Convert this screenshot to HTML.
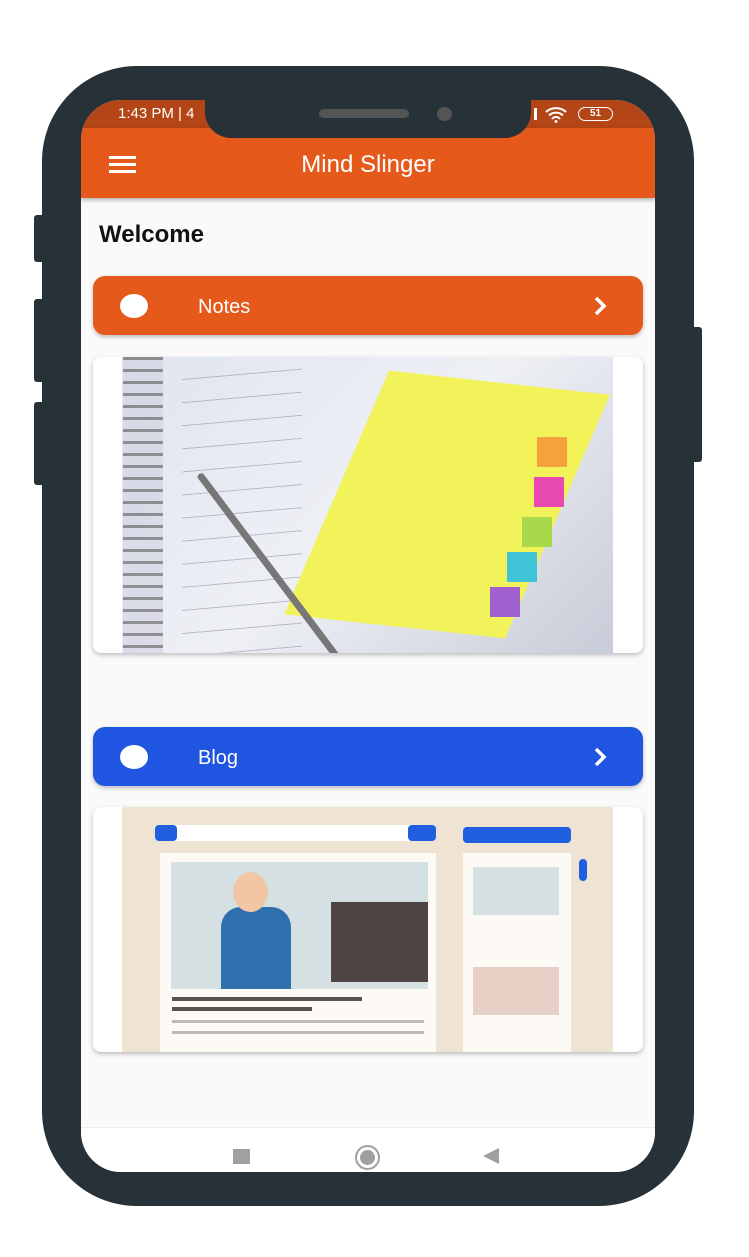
<!DOCTYPE html>
<html><head><style>
*{margin:0;padding:0;box-sizing:border-box}
body{width:749px;height:1257px;background:#fff;position:relative;overflow:hidden;font-family:"Liberation Sans",sans-serif}
.abs{position:absolute}
.btn{position:absolute;left:93px;width:550px;height:59px;border-radius:12px;box-shadow:0 2px 4px rgba(0,0,0,.25);color:#fff;font-size:20px}
.btn .dot{position:absolute;left:27px;top:18px;width:28px;height:24px;border-radius:50%;background:#fff}
.btn .t{position:absolute;left:105px;top:20px}
.btn svg{position:absolute;right:36px;top:19px}
.card{position:absolute;left:93px;width:550px;background:#fff;border-radius:8px;box-shadow:0 2px 5px rgba(0,0,0,.25);overflow:hidden}
.img{position:absolute;left:29px;top:0;width:491px;height:100%;overflow:hidden}
</style></head><body>
<div class="abs" style="left:34px;top:215px;width:12px;height:47px;background:#263238;border-radius:3px"></div>
<div class="abs" style="left:34px;top:299px;width:12px;height:83px;background:#263238;border-radius:3px"></div>
<div class="abs" style="left:34px;top:402px;width:12px;height:83px;background:#263238;border-radius:3px"></div>
<div class="abs" style="left:690px;top:327px;width:12px;height:135px;background:#263238;border-radius:3px"></div>
<div class="abs" style="left:42px;top:66px;width:652px;height:1140px;background:#263238;border-radius:95px"></div>
<div class="abs" style="left:81px;top:100px;width:574px;height:1072px;background:#fafafa;border-radius:40px;overflow:hidden">
  <div class="abs" style="left:0;top:0;width:574px;height:28px;background:#b44516"></div>
  <div class="abs" style="left:37px;top:5px;color:#fff;font-size:15px">1:43 PM | 4</div>
  <div class="abs" style="left:453px;top:8px;width:3px;height:12px;background:#fff"></div>
  <svg class="abs" style="left:464px;top:6px" width="24" height="17" viewBox="0 0 24 17"><path d="M1 6a15 15 0 0 1 20 0M4 9.5a10 10 0 0 1 14 0M7 13a5 5 0 0 1 8 0" stroke="#fff" stroke-width="2" fill="none"/><circle cx="11" cy="15.5" r="1.5" fill="#fff"/></svg>
  <div class="abs" style="left:497px;top:7px;width:35px;height:14px;border:1.5px solid #fff;border-radius:7px;color:#fff;font-size:10px;font-weight:bold;text-align:center;line-height:11px">51</div>
  <div class="abs" style="left:0;top:28px;width:574px;height:70px;background:#e55a1b;box-shadow:0 2px 4px rgba(0,0,0,.3)"></div>
  <div class="abs" style="left:28px;top:56px;width:27px;height:3px;background:#fff;box-shadow:0 7px 0 #fff,0 14px 0 #fff"></div>
  <div class="abs" style="left:0;top:51px;width:574px;text-align:center;color:#fff;font-size:24px">Mind Slinger</div>
  <div class="abs" style="left:18px;top:121px;font-size:24px;font-weight:bold;color:#111">Welcome</div>
  <div class="abs" style="left:0;top:1027px;width:574px;height:45px;background:#fff;border-top:1px solid #eee"></div>
  <div class="abs" style="left:152px;top:1049px;width:17px;height:15px;background:#a0a0a0"></div>
  <div class="abs" style="left:274px;top:1045px;width:25px;height:25px;border:2px solid #a0a0a0;border-radius:50%"><div style="margin:3px;width:15px;height:15px;border-radius:50%;background:#a0a0a0"></div></div>
  <div class="abs" style="left:402px;top:1048px;width:0;height:0;border-top:8px solid transparent;border-bottom:8px solid transparent;border-right:16px solid #a0a0a0"></div>
</div>
<div class="abs" style="left:205px;top:66px;width:326px;height:72px;background:#263238;border-radius:0 0 26px 26px"></div>
<div class="abs" style="left:319px;top:109px;width:90px;height:9px;background:#555;border-radius:5px"></div>
<div class="abs" style="left:437px;top:107px;width:15px;height:14px;background:#555;border-radius:50%"></div>

<div class="btn" style="top:276px;background:#e55a1b"><div class="dot"></div><div class="t">Notes</div>
<svg width="14" height="22" viewBox="0 0 14 22"><path d="M3 3l8 8-8 8" stroke="#fff" stroke-width="3.5" fill="none"/></svg></div>
<div class="card" style="top:357px;height:296px"><div class="img" style="background:linear-gradient(135deg,#dfe5ee,#eef0f5 50%,#c7ccd8)">
  <div class="abs" style="left:1px;top:0;width:40px;height:296px;background:repeating-linear-gradient(180deg,#333 0 3px,#ccd 3px 12px);opacity:.5"></div>
  <div class="abs" style="left:60px;top:0;width:120px;height:296px;background:repeating-linear-gradient(175deg,transparent 0 22px,#99a 22px 23px);opacity:.6"></div>
  <div class="abs" style="left:210px;top:25px;width:230px;height:245px;background:#f2f25a;transform:skewX(-18deg) rotate(6deg)"></div>
  <div class="abs" style="left:415px;top:80px;width:30px;height:30px;background:#f7a13a"></div>
  <div class="abs" style="left:412px;top:120px;width:30px;height:30px;background:#e94ab1"></div>
  <div class="abs" style="left:400px;top:160px;width:30px;height:30px;background:#a8d94a"></div>
  <div class="abs" style="left:385px;top:195px;width:30px;height:30px;background:#3fc3d9"></div>
  <div class="abs" style="left:368px;top:230px;width:30px;height:30px;background:#a060d0"></div>
  <div class="abs" style="left:80px;top:115px;width:230px;height:7px;background:#777;transform:rotate(53deg);transform-origin:0 0;border-radius:3px"></div>
</div></div>

<div class="btn" style="top:727px;background:#1f55e0"><div class="dot"></div><div class="t">Blog</div>
<svg width="14" height="22" viewBox="0 0 14 22"><path d="M3 3l8 8-8 8" stroke="#fff" stroke-width="3.5" fill="none"/></svg></div>
<div class="card" style="top:807px;height:245px">
  <div class="abs" style="left:29px;top:0;width:491px;height:245px;background:#efe3d3"></div>
  <div class="abs" style="left:62px;top:18px;width:280px;height:16px;background:#fff;border-radius:4px"></div>
  <div class="abs" style="left:62px;top:18px;width:22px;height:16px;background:#1f5fe0;border-radius:4px"></div>
  <div class="abs" style="left:315px;top:18px;width:28px;height:16px;background:#1f5fe0;border-radius:4px"></div>
  <div class="abs" style="left:370px;top:20px;width:108px;height:16px;background:#1f5fe0;border-radius:4px"></div>
  <div class="abs" style="left:67px;top:46px;width:276px;height:199px;background:#fdfaf5"></div>
  <div class="abs" style="left:78px;top:55px;width:257px;height:127px;background:#d4e0e2"></div>
  <div class="abs" style="left:238px;top:95px;width:97px;height:80px;background:#4d4443"></div>
  <div class="abs" style="left:128px;top:100px;width:70px;height:82px;background:#2f6fad;border-radius:20px 20px 0 0"></div>
  <div class="abs" style="left:140px;top:65px;width:35px;height:40px;background:#f1c6a4;border-radius:50%"></div>
  <div class="abs" style="left:79px;top:190px;width:190px;height:4px;background:#555"></div>
  <div class="abs" style="left:79px;top:200px;width:140px;height:4px;background:#555"></div>
  <div class="abs" style="left:79px;top:213px;width:252px;height:3px;background:#bbb"></div>
  <div class="abs" style="left:79px;top:224px;width:252px;height:3px;background:#bbb"></div>
  <div class="abs" style="left:370px;top:46px;width:108px;height:199px;background:#fdfaf5"></div>
  <div class="abs" style="left:380px;top:60px;width:86px;height:48px;background:#d4e0e2"></div>
  <div class="abs" style="left:380px;top:160px;width:86px;height:48px;background:#e6cfc5"></div>
  <div class="abs" style="left:486px;top:52px;width:8px;height:22px;background:#1f5fe0;border-radius:4px"></div>
</div>
</body></html>
